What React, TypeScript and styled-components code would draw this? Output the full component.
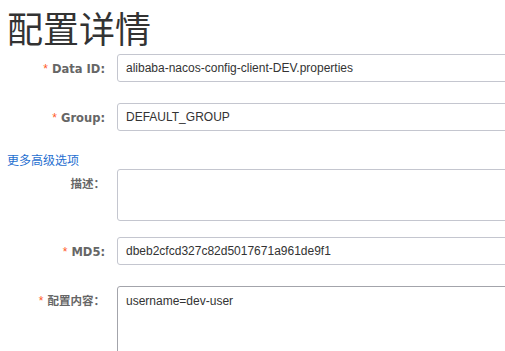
import styled, { createGlobalStyle } from 'styled-components';

const GlobalStyle = createGlobalStyle`
  html, body {
    margin: 0;
    padding: 0;
    background: #fff;
    overflow: hidden;
  }
  body {
    font-family: "Liberation Sans", "Noto Sans CJK SC", sans-serif;
    font-size: 12px;
    color: #333;
  }
`;

const Page = styled.div`
  width: 505px;
  height: 351px;
  padding: 0 0 0 7px;
  box-sizing: border-box;
  overflow: hidden;
`;

const Title = styled.h1`
  margin: 0;
  padding-top: 4px;
  font-family: "Noto Sans CJK SC", sans-serif;
  font-size: 36px;
  line-height: 46px;
  font-weight: 400;
  color: #333;
  height: 54px;
  box-sizing: border-box;
`;

const Row = styled.div<{ $gap: number }>`
  display: flex;
  align-items: flex-start;
  margin-bottom: ${(p) => p.$gap}px;
`;

const Label = styled.label`
  flex: 0 0 98px;
  height: 28px;
  padding-right: 12px;
  text-align: right;
  line-height: 30px;
  font-family: "DejaVu Sans", "Noto Sans CJK SC", sans-serif;
  font-size: 11.5px;
  font-weight: 700;
  color: #666;
  white-space: nowrap;
`;

const Star = styled.span`
  color: #ff5a28;
  margin-right: 4px;
  font-family: "Liberation Sans", sans-serif;
  font-size: 12px;
  font-weight: 400;
`;

const Field = styled.div<{ $h: number; $dark?: boolean }>`
  flex: 0 0 auto;
  width: 420px;
  height: ${(p) => p.$h}px;
  box-sizing: border-box;
  border: 1px solid ${(p) => (p.$dark ? '#a3a4ab' : '#c4c6cf')};
  border-radius: 3px;
  padding: ${(p) => (p.$h > 28 ? '5px 8px' : '0 8px')};
  line-height: ${(p) => (p.$h > 28 ? '18px' : '26px')};
  color: #333;
  white-space: nowrap;
`;

const MoreLink = styled.a`
  display: block;
  color: #1f6fd0;
  font-size: 12px;
  line-height: 16px;
  font-family: "Noto Sans CJK SC", sans-serif;
  margin-bottom: 1px;
  cursor: pointer;
`;

export default function App() {
  return (
    <>
      <GlobalStyle />
      <Page>
        <Title>配置详情</Title>
        <Row $gap={21}>
          <Label>
            <Star>*</Star>Data ID:
          </Label>
          <Field $h={28}>alibaba-nacos-config-client-DEV.properties</Field>
        </Row>
        <Row $gap={21}>
          <Label>
            <Star>*</Star>Group:
          </Label>
          <Field $h={28}>DEFAULT_GROUP</Field>
        </Row>
        <MoreLink>更多高级选项</MoreLink>
        <Row $gap={16}>
          <Label>描述：</Label>
          <Field $h={52} />
        </Row>
        <Row $gap={21}>
          <Label>
            <Star>*</Star>MD5:
          </Label>
          <Field $h={28}>dbeb2cfcd327c82d5017671a961de9f1</Field>
        </Row>
        <Row $gap={0}>
          <Label>
            <Star>*</Star>配置内容：
          </Label>
          <Field $h={110} $dark>
            username=dev-user
          </Field>
        </Row>
      </Page>
    </>
  );
}
